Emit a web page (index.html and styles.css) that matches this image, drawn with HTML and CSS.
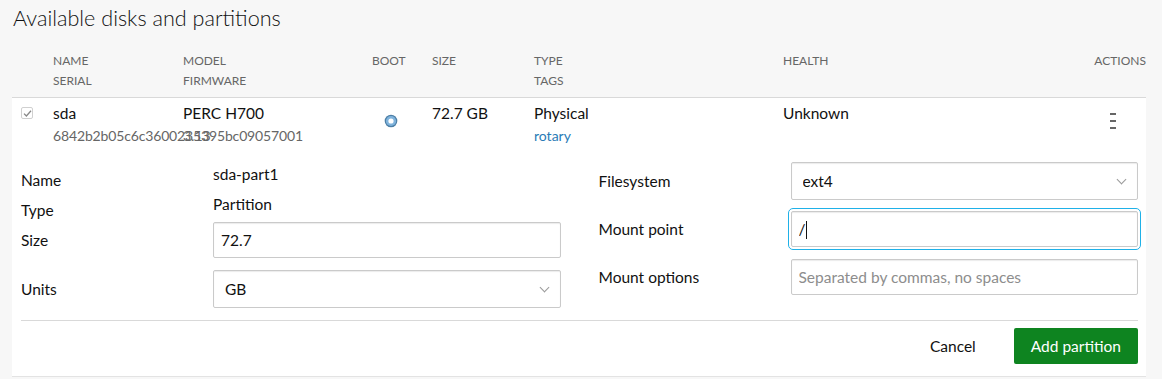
FILE: index.html
```html
<!DOCTYPE html>
<html>
<head>
    <title>Available disks and partitions</title>
    <link rel="stylesheet" href="styles.css">
</head>
<body>
    <h2 class="title">Available disks and partitions</h2>

    <div class="disks">
        <!-- Column headers -->
        <div class="disk-row disk-head">
            <div></div>
            <div>Name<br>Serial</div>
            <div>Model<br>Firmware</div>
            <div>Boot</div>
            <div>Size</div>
            <div>Type<br>Tags</div>
            <div>Health</div>
            <div class="right">Actions</div>
        </div>

        <div class="panel">
            <div class="disk-row disk-item">
                <div>
                    <span class="check">
                        <svg width="9" height="9" viewBox="0 0 9 9"><path d="M1 4.6 L3.4 7 L8 1.8" fill="none" stroke="#888" stroke-width="1.3"/></svg>
                    </span>
                </div>
                <div class="cell">
                    <div class="main">sda</div>
                    <div class="sub serial">6842b2b05c6c3600235395bc09057001</div>
                </div>
                <div class="cell">
                    <div class="main">PERC H700</div>
                    <div class="sub">3.13</div>
                </div>
                <div class="cell">
                    <svg class="boot" width="14" height="14" viewBox="0 0 14 14">
                        <circle cx="7" cy="7" r="6.3" fill="#4d7fa6"/>
                        <circle cx="7" cy="7" r="5.1" fill="#7fb3dc"/>
                        <circle cx="7" cy="7" r="2.6" fill="#ffffff"/>
                    </svg>
                </div>
                <div class="cell"><div class="main">72.7 GB</div></div>
                <div class="cell">
                    <div class="main">Physical</div>
                    <div class="sub"><a class="tag" href="#">rotary</a></div>
                </div>
                <div class="cell"><div class="main">Unknown</div></div>
                <div class="cell">
                    <svg class="kebab" width="6" height="16" viewBox="0 0 6 16">
                        <rect x="0" y="0" width="6" height="2" fill="#666"/>
                        <rect x="0" y="7" width="6" height="2" fill="#666"/>
                        <rect x="0" y="14" width="6" height="2" fill="#666"/>
                    </svg>
                </div>
            </div>

            <form class="partition-form">
                <div class="form-cols">
                    <div class="form-col">
                        <div class="field text-field">
                            <span class="label">Name</span>
                            <span class="value">sda-part1</span>
                        </div>
                        <div class="field text-field">
                            <span class="label">Type</span>
                            <span class="value">Partition</span>
                        </div>
                        <div class="field">
                            <label class="label" for="size">Size</label>
                            <input class="input" id="size" type="text" value="72.7">
                        </div>
                        <div class="field">
                            <label class="label" for="units">Units</label>
                            <div class="select">
                                <select id="units">
                                    <option>GB</option>
                                </select>
                            </div>
                        </div>
                    </div>

                    <div class="form-col">
                        <div class="field field-select">
                            <label class="label" for="fs">Filesystem</label>
                            <div class="select">
                                <select id="fs">
                                    <option>ext4</option>
                                </select>
                            </div>
                        </div>
                        <div class="field">
                            <label class="label" for="mount">Mount point</label>
                            <div class="caret-wrap">
                                <input class="input is-focused" id="mount" type="text" value="/">
                            </div>
                        </div>
                        <div class="field">
                            <label class="label" for="opts">Mount options</label>
                            <input class="input" id="opts" type="text" placeholder="Separated by commas, no spaces">
                        </div>
                    </div>
                </div>

                <div class="form-actions">
                    <button type="button" class="btn-link">Cancel</button>
                    <button type="button" class="btn-positive">Add partition</button>
                </div>
            </form>
        </div>
    </div>
</body>
</html>
```

FILE: styles.css
```css
body {
    margin: 0;
    background: #f7f7f7;
    color: #111111;
    font-family: Lato, "Liberation Sans", sans-serif;
    font-size: 15.5px;
}

.title {
    margin: 0;
    padding-left: 13px;
    font-size: 21.6px;
    font-weight: 300;
    line-height: 36px;
}

.disks {
    margin: 0 16px 0 12px;
}

.disk-row {
    display: grid;
    grid-template-columns: 32px 130px 189px 60px 102px 249px 1fr 52px;
    padding-left: 9px;
}

.disk-head {
    padding-top: 15px;
    padding-bottom: 6px;
    border-bottom: 1px solid #d9d9d9;
    color: #666666;
    font-size: 12px;
    line-height: 20px;
    text-transform: uppercase;
}

.disk-head .right {
    text-align: right;
}

.panel {
    background: #ffffff;
    border-bottom: 1px solid #e3e3e3;
}

.disk-item {
    padding-top: 3px;
}

.cell {
    white-space: nowrap;
}

.main {
    line-height: 24px;
}

.sub {
    color: #666666;
    font-size: 14px;
    line-height: 21px;
}

.serial {
    letter-spacing: -0.15px;
}

.tag {
    color: #2a7bb6;
    text-decoration: none;
}

.check {
    display: flex;
    align-items: center;
    justify-content: center;
    width: 12px;
    height: 12px;
    margin-top: 6px;
    border: 1px solid #d0d0d0;
    border-radius: 2px;
    box-sizing: border-box;
}

.boot {
    display: block;
    margin: 13px 0 0 12px;
}

.kebab {
    display: block;
    margin: 12px 0 0 16px;
}

/* Add partition form */
.partition-form {
    padding: 16px 8px 0 9px;
}

.form-cols {
    display: grid;
    grid-template-columns: 1fr 1fr;
    gap: 38px;
    align-items: start;
}

.field {
    display: grid;
    grid-template-columns: 192px 1fr;
    align-items: center;
    margin-bottom: 12px;
}

.field:last-child {
    margin-bottom: 0;
}

.field-select {
    margin-bottom: 11px;
}

.text-field {
    align-items: start;
    height: 30px;
    margin-bottom: 0;
}

.text-field .label {
    padding-top: 6px;
}

.label,
.value {
    line-height: 24px;
}

.input,
.select select {
    width: 100%;
    box-sizing: border-box;
    border: 1px solid #cacaca;
    border-radius: 2px;
    box-shadow: inset 0 1px 1px rgba(0, 0, 0, 0.08);
    background: #ffffff;
    color: #111111;
    font-family: inherit;
    font-size: 15.5px;
}

.input {
    height: 36px;
    padding: 0 7px;
}

.input::placeholder {
    color: #8d8d8d;
}

.input.is-focused {
    outline: 1px solid #1fb1e8;
    outline-offset: 2px;
}

.caret-wrap {
    position: relative;
}

.caret-wrap::after {
    content: "";
    position: absolute;
    left: 15px;
    top: 10px;
    width: 1px;
    height: 18px;
    background: #111111;
}

.select {
    position: relative;
}

.select select {
    height: 38px;
    padding: 0 11px;
    appearance: none;
    -webkit-appearance: none;
}

.select::after {
    content: "";
    position: absolute;
    right: 13px;
    top: 14px;
    width: 6px;
    height: 6px;
    border-right: 1px solid #9a9a9a;
    border-bottom: 1px solid #9a9a9a;
    transform: rotate(45deg);
}

.form-actions {
    display: flex;
    justify-content: flex-end;
    gap: 21px;
    margin-top: 12px;
    padding: 7px 0 12px;
    border-top: 1px solid #d9d9d9;
}

.form-actions button {
    height: 36px;
    padding: 0 17px;
    border: none;
    border-radius: 2px;
    font-family: inherit;
    font-size: 15.5px;
    cursor: pointer;
}

.btn-link {
    background: transparent;
    color: #111111;
}

.btn-positive {
    background: #0e8420;
    color: #ffffff;
}
```
